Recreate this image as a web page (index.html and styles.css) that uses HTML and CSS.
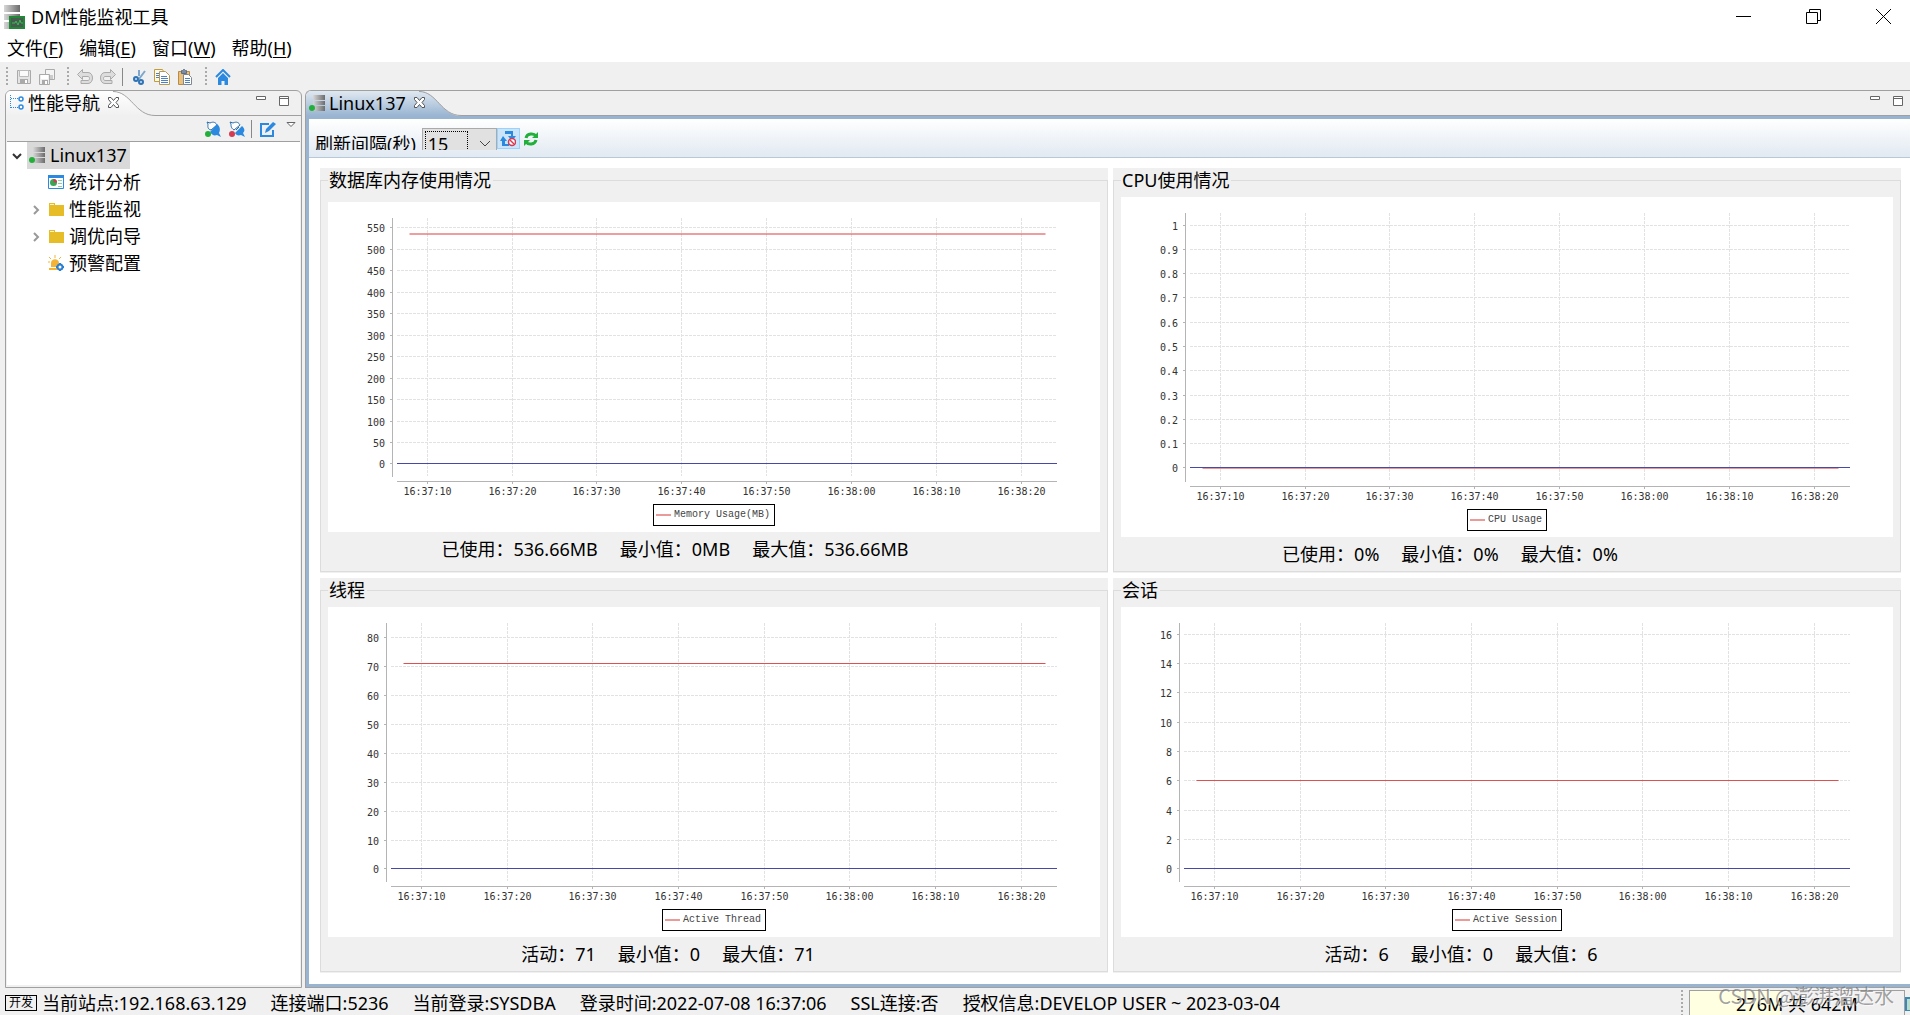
FILE: index.html
```html
<!DOCTYPE html>
<html lang="zh-CN">
<head>
<meta charset="utf-8">
<title>DM性能监视工具</title>
<link rel="stylesheet" href="styles.css">
</head>
<body>
<svg class="defs" aria-hidden="true">
  <defs>
    <linearGradient id="metal" x1="0" x2="1" y1="0" y2="0"><stop offset="0" stop-color="#d8d8d8"/><stop offset="1" stop-color="#6c6c6c"/></linearGradient>
    <linearGradient id="tab-plain" x1="0" x2="0" y1="0" y2="1"><stop offset="0" stop-color="#fff"/><stop offset="1" stop-color="#f0f0f0"/></linearGradient>
    <linearGradient id="tab-active" x1="0" x2="0" y1="0" y2="1"><stop offset="0" stop-color="#dfe8f1"/><stop offset="1" stop-color="#99b4d1"/></linearGradient>
    <symbol id="server" viewBox="0 0 16 16">
      <path fill="url(#metal)" d="M4 0h12v5H4zM4 6h12v4H4zM4 11h12v5H4z"/><circle cx="3" cy="13" r="3" fill="#22b03a"/>
    </symbol>
    <symbol id="folder" viewBox="0 0 16 16">
      <path fill="#e6bd27" d="M1 2h6v2h9v11H1z"/><path fill="#fff4c8" d="M2 3h4v1H2z"/>
    </symbol>
    <symbol id="close" viewBox="0 0 11 11">
      <path fill="#fff" stroke="#555" d="M.5.5h2.500l2.500 3 2.500-3h2.500v2L8 5.500l2.500 3v2H8l-2.500-3-2.500 3H.5v-2l2.500-3-2.500-3z"/>
    </symbol>
    <symbol id="minimize" viewBox="0 0 10 4"><path fill="#fff" stroke="#666" d="M.5.5h9v3h-9z"/></symbol>
    <symbol id="maximize" viewBox="0 0 10 10"><path fill="#fff" stroke="#666" d="M.5.5h9v9h-9zM.5 2.500h9"/></symbol>
  </defs>
</svg>

<header class="titlebar">
  <svg class="app-icon" viewBox="0 0 22 25"><path fill="url(#metal)" d="M0 0h16v7H0zM0 9h16v6H0zM0 17h16v7H0z"/><path fill="#4a5a50" stroke="#1f8a35" stroke-width="2" d="M6 12h14v11H6z"/><path fill="none" stroke="#35c050" d="M8 18h3l1-2 2 4 2-5 1 3h2"/></svg>
  <h1 class="title">DM性能监视工具</h1>
  <div class="window-buttons">
    <button class="window-button" aria-label="最小化"><svg width="15" height="15"><path stroke="#000" d="M0 7.500h15"/></svg></button>
    <button class="window-button" aria-label="还原"><svg width="15" height="15"><path fill="none" stroke="#000" d="M.5 3.500h11v11H.5zM3.500 3V.5h11v11H12"/></svg></button>
    <button class="window-button" aria-label="关闭"><svg width="15" height="15"><path stroke="#000" d="M0 0l15 15M15 0L0 15"/></svg></button>
  </div>
</header>

<nav class="menubar">
  <button class="menu">文件(<u>F</u>)</button>
  <button class="menu">编辑(<u>E</u>)</button>
  <button class="menu">窗口(<u>W</u>)</button>
  <button class="menu">帮助(<u>H</u>)</button>
</nav>

<div class="toolbar">
  <span class="grip"></span>
  <div class="tool-group">
    <button class="tool" aria-label="保存"><svg viewBox="0 0 16 16"><path fill="#e4e4e4" stroke="#aaa" d="M1.500 1.500h13v13h-13z"/><path fill="#fafafa" stroke="#bbb" d="M3.500 1.500h9v6h-9z"/><path fill="#aaa" d="M4 10h8v5H4z"/><path fill="#fff" d="M9 11h2v3H9z"/></svg></button>
    <button class="tool" aria-label="全部保存"><svg viewBox="0 0 16 16"><path fill="#f4f4f4" stroke="#aaa" d="M6.500.5h9v10h-9z"/><path fill="#ccc" d="M8 6h6v4H8z"/><path fill="#eee" stroke="#aaa" d="M.5 5.500h10v10H.5z"/><path fill="#fff" d="M2 6h7v4H2z"/><path fill="#aaa" d="M3 11h6v4H3z"/><path fill="#fff" d="M6 12h2v3H6z"/></svg></button>
  </div>
  <span class="grip"></span>
  <div class="tool-group tight">
    <button class="tool" aria-label="撤销"><svg viewBox="0 0 16 16"><path fill="#ddd" stroke="#aaa" d="M.5 5.500l5-5v3H11c6 0 6 11 0 11H4v-3h7c2 0 2-4 0-4H5.500v3z"/></svg></button>
    <button class="tool" aria-label="重做"><svg viewBox="0 0 16 16"><path fill="#ddd" stroke="#aaa" d="M15.500 5.500l-5-5v3H5c-6 0-6 11 0 11h7v-3H5c-2 0-2-4 0-4h5.500v3z"/></svg></button>
  </div>
  <span class="rule"></span>
  <div class="tool-group">
    <button class="tool" aria-label="剪切"><svg viewBox="0 0 16 16"><path fill="none" stroke="#7fa6cc" stroke-width="2" d="M8 1v6M14 2L8 10"/><g fill="#cfe0f0" stroke="#2f74b5" stroke-width="2"><circle cx="5" cy="10" r="2"/><circle cx="10" cy="13" r="2"/></g></svg></button>
    <button class="tool" aria-label="复制"><svg viewBox="0 0 16 16"><path fill="#fffbe8" stroke="#c29b3c" d="M.5.5h8l1 2v10h-9z"/><path fill="#fff" stroke="#b59a55" d="M5.500 2.500h6l4 4v9h-10z"/><path stroke="#4f81bd" d="M2 4.500h3M2 6.500h3M2 8.500h3M7 7.500h6M7 9.500h7M7 11.500h7M7 13.500h7"/></svg></button>
    <button class="tool" aria-label="粘贴"><svg viewBox="0 0 16 16"><path fill="#e9c17c" stroke="#b98b45" d="M1.500 2.500h11v13h-11z"/><path fill="#7b8ea6" stroke="#5d6f86" d="M4.500 1.500h1l1-1h1l1 1h1v3h-5z"/><path fill="#fff" stroke="#7e8894" d="M6.500 5.500h5l3 3v7h-8z"/><path stroke="#4f81bd" d="M8 9.500h5M8 11.500h5M8 13.500h5"/></svg></button>
  </div>
  <span class="grip"></span>
  <div class="tool-group">
    <button class="tool" aria-label="主页"><svg viewBox="0 0 16 16"><path fill="none" stroke="#2b8ae0" stroke-width="2" d="M1 8l7-7 7 7"/><path fill="#2b8ae0" d="M8 4l5 5v7H9.500v-4h-3v4H3V9z"/></svg></button>
  </div>
</div>

<main class="workbench">
  <aside class="view nav-view">
    <div class="tab-strip">
      <div class="tab">
        <svg width="14" height="16" viewBox="0 0 14 16"><path fill="none" stroke="#2b8ae0" stroke-dasharray="1 1" d="M.5 0v13.500M1 3.500h7M1 12.500h7"/><g fill="#fff" stroke="#2b8ae0" stroke-width="1.500"><circle cx="11" cy="4" r="2"/><circle cx="11" cy="12" r="2"/></g></svg>
        <span>性能导航</span>
        <button class="tab-close" aria-label="关闭"><svg width="11" height="11"><use href="#close"/></svg></button>
      </div>
      <svg class="tab-curve" width="42" height="25"><path fill="url(#tab-plain)" d="M0 0c18 0 22 24 41 25H0z"/><path fill="none" stroke="#a0a0a0" d="M0 .5c18 0 22 24 42 24"/></svg>
      <div class="tab-rest">
        <button class="plain" aria-label="最小化"><svg width="10" height="4"><use href="#minimize"/></svg></button>
        <button class="plain" aria-label="最大化"><svg width="10" height="10"><use href="#maximize"/></svg></button>
      </div>
    </div>
    <div class="view-toolbar">
      <button class="tool" aria-label="连接"><svg viewBox="0 0 16 16"><path fill="#fff" stroke="#2b6ca8" d="M2 1l3 1c4-2 6 0 7 2l-6 5C2 8 3 5 3 3z"/><path fill="#2b8ae0" d="M12 3c4 3 3 7 2 9l2 4-4-2c-3 1-5 0-7-3z"/><circle cx="3" cy="13" r="3" fill="#22b03a"/></svg></button>
      <button class="tool" aria-label="断开"><svg viewBox="0 0 16 16"><path fill="#fff" stroke="#2b6ca8" d="M1 1l3 1c4-2 6 0 7 2l-6 5C2 7 2 5 2 3zM7 9l3-3"/><path fill="#2b8ae0" d="M13 5c3 3 3 5 1 7l2 4-4-2c-3 1-5 0-6-2z"/><circle cx="3" cy="13" r="3" fill="#d43a52"/></svg></button>
      <span class="rule"></span>
      <button class="tool" aria-label="编辑"><svg viewBox="0 0 16 16"><path fill="none" stroke="#2b8ae0" stroke-width="2" d="M9 3H1v12h12V9"/><path fill="#2b8ae0" d="M5 12l1-4 7-7 3 2-7 7z"/></svg></button>
      <button class="plain view-menu" aria-label="视图菜单"><svg width="10" height="6"><path fill="#fff" stroke="#666" d="M1 .5h8l-4 4z"/></svg></button>
    </div>
    <ul class="tree">
      <li class="node">
        <svg class="twisty" viewBox="0 0 10 10"><path fill="none" stroke="#333" stroke-width="2" d="M1 3l4 4 4-4"/></svg>
        <span class="node-label selected"><svg class="icon"><use href="#server"/></svg>Linux137</span>
      </li>
      <li class="node child">
        <span class="twisty"></span>
        <span class="node-label"><svg class="icon" viewBox="0 0 16 16"><path fill="#fff" stroke="#2b8ae0" d="M.5 1.500h15v13H.5z"/><path fill="#2b8ae0" d="M0 1h16v3H0z"/><circle cx="5.500" cy="8.500" r="3.500" fill="#35a853"/><path fill="#d43a52" d="M5.500 8.500V5A3.500 3.500 0 0 1 9 8.500z"/><path stroke="#8fcf9c" d="M10 6.500h4M10 9.500h4M10 12.500h4"/></svg>统计分析</span>
      </li>
      <li class="node child">
        <svg class="twisty" viewBox="0 0 10 10"><path fill="none" stroke="#999" stroke-width="2" d="M3 1l4 4-4 4"/></svg>
        <span class="node-label"><svg class="icon"><use href="#folder"/></svg>性能监视</span>
      </li>
      <li class="node child">
        <svg class="twisty" viewBox="0 0 10 10"><path fill="none" stroke="#999" stroke-width="2" d="M3 1l4 4-4 4"/></svg>
        <span class="node-label"><svg class="icon"><use href="#folder"/></svg>调优向导</span>
      </li>
      <li class="node child">
        <span class="twisty"></span>
        <span class="node-label"><svg class="icon" viewBox="0 0 16 16"><path fill="#f5b335" d="M3 12V8c0-5 8-5 8 0v4zM1 13h8v2H1z"/><path stroke="#f5b335" d="M7 0v3M1 2l2 2M13 2l-2 2M0 7h2"/><circle cx="12" cy="12" r="2.500" fill="#fff" stroke="#2b7fd0" stroke-width="2"/><path stroke="#2b7fd0" stroke-width="2" stroke-dasharray="1 6" d="M12 8v8M8 12h8"/></svg>预警配置</span>
      </li>
    </ul>
  </aside>

  <section class="view editor-view">
    <div class="tab-strip">
      <div class="tab active">
        <svg class="icon"><use href="#server"/></svg>
        <span>Linux137</span>
        <button class="tab-close" aria-label="关闭"><svg width="11" height="11"><use href="#close"/></svg></button>
      </div>
      <svg class="tab-curve" width="42" height="25"><path fill="url(#tab-active)" d="M0 0c18 0 22 24 41 25H0z"/><path fill="none" stroke="#a0a0a0" d="M0 .5c18 0 22 24 42 24"/></svg>
      <div class="tab-rest">
        <button class="plain" aria-label="最小化"><svg width="10" height="4"><use href="#minimize"/></svg></button>
        <button class="plain" aria-label="最大化"><svg width="10" height="10"><use href="#maximize"/></svg></button>
      </div>
    </div>
    <div class="editor-body">
      <div class="editor-toolbar">
        <div class="refresh">
          <label for="interval">刷新间隔(秒)</label>
          <div class="combo">
            <select id="interval"><option>15</option></select>
            <svg width="12" height="8"><path fill="none" stroke="#444" d="M1 1l5 5 5-5"/></svg>
          </div>
          <button class="toggle" aria-label="停止自动刷新"><svg width="16" height="16" viewBox="0 0 16 16"><path fill="#2b8ae0" d="M5 0h8v5h3l-4 5-4-5h3V3H5zM3 5l4 5H5v3h4v2H2v-5H0z"/><circle cx="12" cy="11" r="3.500" fill="#fff" stroke="#d43a52" stroke-width="1.500"/><path stroke="#d43a52" stroke-width="1.500" d="M10 9l4 4"/></svg></button>
          <button class="plain refresh-now" aria-label="刷新"><svg width="14" height="14" viewBox="0 0 14 14"><path fill="none" stroke="#22b03a" stroke-width="3" d="M2 6c1-5 8-5 10-2M12 8c-1 5-8 5-10 2"/><path fill="#22b03a" d="M14 0v6H8zM0 14V8h6z"/></svg></button>
        </div>
      </div>
      <div class="dashboard">
        <div class="panel roomy"><fieldset class="group">
          <legend>数据库内存使用情况</legend>
          <div class="chart"><div class="plot" data-chart="memory"></div><div class="key">Memory Usage(MB)</div></div>
          <p class="stats"><span>已使用：536.66MB</span><span>最小值：0MB</span><span>最大值：536.66MB</span></p>
        </fieldset></div>
        <div class="panel percent"><fieldset class="group">
          <legend>CPU使用情况</legend>
          <div class="chart"><div class="plot" data-chart="cpu"></div><div class="key">CPU Usage</div></div>
          <p class="stats"><span>已使用：0%</span><span>最小值：0%</span><span>最大值：0%</span></p>
        </fieldset></div>
        <div class="panel"><fieldset class="group">
          <legend>线程</legend>
          <div class="chart"><div class="plot" data-chart="threads"></div><div class="key">Active Thread</div></div>
          <p class="stats"><span>活动：71</span><span>最小值：0</span><span>最大值：71</span></p>
        </fieldset></div>
        <div class="panel"><fieldset class="group">
          <legend>会话</legend>
          <div class="chart"><div class="plot" data-chart="sessions"></div><div class="key">Active Session</div></div>
          <p class="stats"><span>活动：6</span><span>最小值：0</span><span>最大值：6</span></p>
        </fieldset></div>
      </div>
    </div>
  </section>
</main>

<footer class="statusbar">
  <span class="badge">开发</span>
  <div class="status-items">
    <span>当前站点:192.168.63.129</span>
    <span>连接端口:5236</span>
    <span>当前登录:SYSDBA</span>
    <span>登录时间:2022-07-08 16:37:06</span>
    <span>SSL连接:否</span>
    <span>授权信息:DEVELOP USER ~ 2023-03-04</span>
  </div>
  <span class="grip"></span>
  <div class="heap">276M 共 642M</div>
  <span class="trash"></span>
  <span class="watermark">CSDN @澎湃溜达水</span>
</footer>
<script src="charts.js"></script>
</body>
</html>
```
FILE: styles.css
```css
* { box-sizing: border-box; }

body {
  display: flex;
  flex-direction: column;
  height: 100vh;
  margin: 0;
  overflow: hidden;
  background: #f0f0f0;
  color: #000;
  font: 18px/24px "Noto Sans", "Noto Sans CJK SC", sans-serif;
  white-space: nowrap;
}

button {
  padding: 0;
  border: 0;
  background: none;
  color: inherit;
  font: inherit;
}

svg { display: block; flex: none; }
.defs { position: absolute; width: 0; height: 0; }
.icon { width: 16px; height: 16px; }

/* Title and menus */
.titlebar {
  display: flex;
  align-items: center;
  height: 34px;
  padding: 0 19px 0 4px;
  background: #fff;
}
.app-icon { width: 22px; height: 25px; }
.title { flex: 1; margin: 0 0 0 5px; font-size: 18px; font-weight: 400; }
.window-buttons { display: flex; gap: 55px; padding-bottom: 2px; }
.menubar {
  display: flex;
  gap: 16px;
  height: 28px;
  padding: 2px 7px;
  background: #fff;
}
.menu u { text-underline-offset: 2px; }

/* Toolbars */
.toolbar { display: flex; align-items: center; height: 28px; padding: 2px 6px 0; }
.grip {
  width: 2px;
  height: 20px;
  background: repeating-linear-gradient(#aaa 0 2px, transparent 2px 4px);
}
.tool-group { display: flex; gap: 7px; margin: 0 12px 0 8px; }
.tool-group.tight { margin-right: 6px; }
.tool svg { width: 16px; height: 16px; }
.rule { width: 1px; height: 18px; background: #888; }
.plain svg { overflow: visible; }

/* Views */
.workbench { flex: 1; display: flex; gap: 3px; min-height: 0; padding-left: 5px; }
.view { display: flex; flex-direction: column; border: 1px solid #a0a0a0; }
.nav-view { width: 297px; padding: 0 1px 2px; border-radius: 6px 6px 0 0; }
.editor-view { flex: 1; min-width: 0; border-right: 0; border-radius: 6px 0 0 0; overflow: hidden; }
.tab-strip { display: flex; flex: none; height: 25px; }
.nav-view .tab-strip { margin: 0 -1px; }
.tab {
  display: flex;
  align-items: center;
  gap: 4px;
  padding: 0 0 2px 4px;
  border-radius: 5px 0 0 0;
  background: linear-gradient(#fff, #f0f0f0);
}
.tab.active { padding-left: 3px; background: linear-gradient(#dfe8f1, #99b4d1); }
.tab-close { position: relative; z-index: 1; margin-left: 4px; }
.tab-curve { margin-left: -6px; }
.tab-rest {
  flex: 1;
  display: flex;
  justify-content: flex-end;
  gap: 13px;
  align-items: flex-start;
  padding: 5px 12px 0 0;
  border-bottom: 1px solid #a0a0a0;
}
.editor-view .tab-rest { padding-right: 7px; }
.view-toolbar {
  display: flex;
  align-items: center;
  justify-content: flex-end;
  gap: 8px;
  height: 26px;
  padding-right: 4px;
  border-bottom: 1px solid #a0a0a0;
}
.view-toolbar .rule { margin-left: -2px; }
.view-menu { align-self: flex-start; margin-left: 2px; padding-top: 6px; }

.tree { flex: 1; margin: 0; padding: 0; background: #fff; list-style: none; }
.node { display: flex; align-items: center; height: 27px; padding-left: 5px; }
.child { padding-left: 24px; }
.twisty { width: 10px; height: 10px; margin-right: 5px; }
.node-label { display: flex; align-items: center; gap: 5px; height: 27px; padding: 0 3px 2px 2px; }
.selected { background: #d9d9d9; }

/* Editor */
.editor-body {
  flex: 1;
  display: flex;
  flex-direction: column;
  min-height: 0;
  border: solid #99b4d1;
  border-width: 3px 0 3px 3px;
  background: #fff;
}
.editor-toolbar {
  flex: none;
  height: 39px;
  padding: 9px 0 0 6px;
  border-bottom: 1px solid #b8c8d8;
  background: linear-gradient(#fff, #e1e9f2);
}
.refresh { display: flex; height: 22px; overflow: hidden; line-height: 32px; }
.combo {
  display: flex;
  align-items: center;
  gap: 11px;
  width: 75px;
  height: 32px;
  margin-left: 6px;
  padding: 2px;
  border: 1px solid #aaa;
  background: #e1e1e1;
}
.combo select {
  width: 43px;
  height: 26px;
  padding: 0 2px;
  border: 1px dotted #000;
  border-radius: 0;
  appearance: none;
  background: none;
  color: #000;
  font: inherit;
  line-height: 22px;
}
.toggle { width: 23px; height: 21px; padding: 2px; border: 1px solid #99d1ff; background: #cce4f7; }
.refresh-now { align-self: flex-start; margin: 4px; }

.dashboard {
  flex: 1;
  display: grid;
  grid-template-columns: 1fr 1fr;
  grid-template-rows: 81fr 79fr;
  gap: 5px;
  min-height: 0;
  padding: 10px 9px 11px 11px;
}
.panel { display: flex; min-width: 0; min-height: 0; padding-bottom: 1px; background: #f0f0f0; }
.group {
  flex: 1;
  display: flex;
  flex-direction: column;
  min-width: 0;
  margin: 0;
  padding: 5px 7px 0;
  border: 1px solid #dcdcdc;
}
.group legend { height: 24px; padding: 0 2px 0 1px; }
.roomy .group { padding-top: 10px; }
.chart { flex: 1; display: flex; flex-direction: column; align-items: center; min-height: 0; background: #fff; }
.plot { flex: 1; width: 100%; min-height: 0; overflow: hidden; }
.key {
  display: flex;
  align-items: center;
  gap: 3px;
  height: 22px;
  margin-bottom: 6px;
  padding: 0 4px 0 2px;
  border: 1px solid #000;
  color: #444;
  font: 10px/20px "Liberation Mono", monospace;
}
.key::before { width: 15px; height: 2px; background: #eb9a9a; content: ""; }
.stats { display: flex; justify-content: center; gap: 22px; margin: 0; padding: 5px 92px 5px 0; }
.roomy .stats { padding: 5px 78px 10px 0; }
.percent .stats { padding-right: 114px; }

/* Chart drawing */
.grid { stroke: #e2e2e2; stroke-dasharray: 3 1; }
.axis { stroke: #b4b4b4; }
.zero { stroke: #4848a8; }
.series { stroke: #e05050; }
.tick { fill: #333; font: 10px "DejaVu Sans Mono", monospace; }
.tick-x { text-anchor: middle; }
.tick-y { text-anchor: end; }

/* Status bar */
.statusbar {
  position: relative;
  display: flex;
  flex: none;
  align-items: flex-start;
  height: 27px;
  padding: 2px 0 0 5px;
  overflow: visible;
}
.badge {
  width: 32px;
  height: 16px;
  margin: 5px 5px 0 0;
  border: 1px solid #000;
  font-size: 12px;
  line-height: 14px;
  text-align: center;
}
.status-items { flex: 1; display: flex; gap: 24px; padding-top: 1px; }
.statusbar .grip { height: 25px; margin-right: 6px; }
.heap {
  width: 216px;
  height: 28px;
  border: 1px solid #a0a0a0;
  background: linear-gradient(90deg, #ffffe1 91px, #f0f0f0 91px);
  line-height: 26px;
  text-align: center;
}
.trash { width: 5px; height: 14px; margin-top: 7px; border: solid #3b87b5; border-width: 2px 0 1px 2px; background: #b9dccb; }
.watermark {
  position: absolute;
  right: 16px;
  bottom: 7px;
  color: rgba(110, 110, 110, .65);
  font: 20px/24px "Noto Sans CJK SC", sans-serif;
  text-shadow: 1px 1px 0 rgba(255, 255, 255, .7);
}
```
FILE: charts.js
```js
const TIME = { from: 6.45, to: 84.2, first: 7.87, last: 82.8 };
const CHARTS = {
  memory: { axis: 64, min: -28.1, max: 573, step: 50, top: 550, value: 536.66, width: 2, opacity: 0.55 },
  cpu: { axis: 64, min: -0.054, max: 1.05, step: 0.1, top: 1, value: 0, width: 2, opacity: 0.6 },
  threads: { axis: 58, min: -4.17, max: 85, step: 10, top: 80, value: 71, width: 1, opacity: 1 },
  sessions: { axis: 58, min: -0.82, max: 16.75, step: 2, top: 16, value: 6, width: 1, opacity: 1 }
};

function draw(host) {
  const c = CHARTS[host.dataset.chart];
  const w = host.clientWidth;
  const h = host.clientHeight;
  const left = c.axis + 5, right = w - 43, top = 16, bottom = h - 28;
  const snap = v => Math.floor(v) + 0.5;
  const x = t => snap(left + (t - TIME.from) / (TIME.to - TIME.from) * (right - left));
  const y = v => snap(bottom - (v - c.min) / (c.max - c.min) * (bottom - top));
  const line = (cls, x1, y1, x2, y2, extra = '') =>
    `<line class="${cls}" x1="${x1}" y1="${y1}" x2="${x2}" y2="${y2}" ${extra}/>`;
  let out = '';

  for (let i = 0; i <= Math.round(c.top / c.step); i++) {
    const v = Number((i * c.step).toFixed(1));
    out += line('grid', left, y(v), right, y(v));
    out += line('axis', c.axis - 2, y(v), c.axis, y(v));
    out += `<text class="tick tick-y" x="${c.axis - 7}" y="${y(v) + 4}">${v}</text>`;
  }
  for (let t = 10; t <= 80; t += 10) {
    const label = `16:${37 + Math.floor(t / 60)}:${String(t % 60).padStart(2, '0')}`;
    out += line('grid', x(t), top, x(t), bottom);
    out += line('axis', x(t), bottom + 5, x(t), bottom + 8);
    out += `<text class="tick tick-x" x="${x(t)}" y="${bottom + 19}">${label}</text>`;
  }
  out += line('axis', c.axis + 0.5, top, c.axis + 0.5, bottom + 1);
  out += line('axis', left, bottom + 5.5, right, bottom + 5.5);
  const sy = c.width === 2 ? y(c.value) + 0.5 : y(c.value);
  out += line('series', x(TIME.first), sy, x(TIME.last), sy, `stroke-width="${c.width}" opacity="${c.opacity}"`);
  out += line('zero', left, y(0), right, y(0));
  host.innerHTML = `<svg width="${w}" height="${h}">${out}</svg>`;
}

const plots = document.querySelectorAll('.plot');
plots.forEach(draw);
window.addEventListener('resize', () => {
  plots.forEach(p => { p.innerHTML = ''; });
  plots.forEach(draw);
});
```
